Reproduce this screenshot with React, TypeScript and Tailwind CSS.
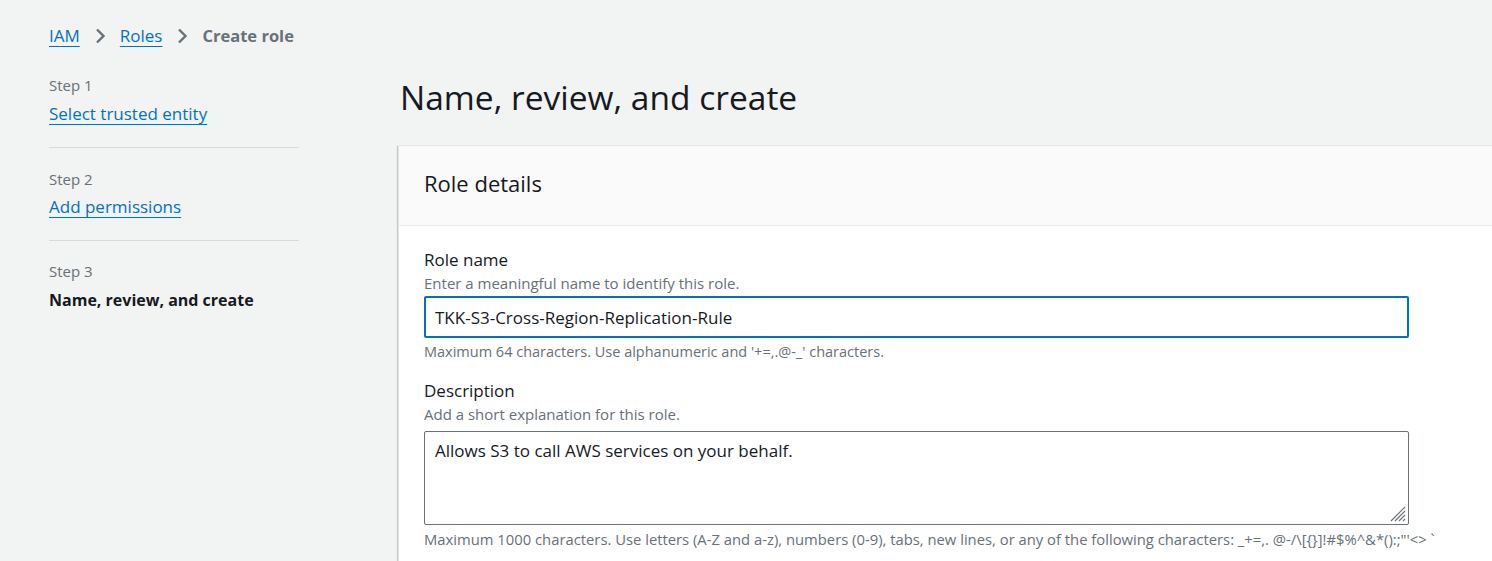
import React from 'react';

const font = { fontFamily: '"Open Sans", "Noto Sans", Arial, sans-serif' };

function Chevron() {
    return (
        <svg viewBox="0 0 16 16" className="w-4 h-4 mx-[12px]" fill="none" stroke="#687078" strokeWidth="2.4">
            <path d="M5 1.5l6.5 6.5L5 14.5" />
        </svg>
    );
}

function ResizeGrip() {
    return (
        <svg viewBox="0 0 16 16" className="absolute right-[3px] bottom-[3px] w-[16px] h-[16px]" stroke="#687078" strokeWidth="1.1">
            <path d="M1 15L15 1M5 15L15 5M9 15L15 9M13 15L15 13" />
        </svg>
    );
}

function Breadcrumbs() {
    return (
        <nav className="flex items-center text-[17px] leading-[22px]">
            <a className="text-[#0073bb] underline underline-offset-[4px] decoration-1">IAM</a>
            <Chevron />
            <a className="text-[#0073bb] underline underline-offset-[4px] decoration-1">Roles</a>
            <Chevron />
            <span className="text-[#687078] font-bold text-[16.5px]">Create role</span>
        </nav>
    );
}

function StepNav() {
    return (
        <div className="w-[250px] shrink-0 flex flex-col">
            <div className="pb-[22px] border-b border-[#d5dbdb]">
                <div className="text-[15px] leading-[20px] text-[#687078]">Step 1</div>
                <a className="block mt-[8px] text-[17px] leading-[22px] text-[#0073bb] underline underline-offset-[4px] decoration-1">Select trusted entity</a>
            </div>
            <div className="pt-[21px] pb-[22px] border-b border-[#d5dbdb]">
                <div className="text-[15px] leading-[20px] text-[#687078]">Step 2</div>
                <a className="block mt-[7px] text-[17px] leading-[22px] text-[#0073bb] underline underline-offset-[4px] decoration-1">Add permissions</a>
            </div>
            <div className="pt-[20px]">
                <div className="text-[15px] leading-[20px] text-[#687078]">Step 3</div>
                <div className="mt-[8px] text-[16px] leading-[22px] font-bold text-[#16191f] whitespace-nowrap">Name, review, and create</div>
            </div>
        </div>
    );
}

export default function App() {
    return (
        <div className="w-[1492px] h-[561px] overflow-hidden bg-[#f2f3f3]" style={font}>
            <div className="pl-[49px] pt-[25px]">
                <Breadcrumbs />
            </div>
            <div className="flex mt-[28px] pl-[49px]">
                <StepNav />
                <main className="ml-[99px] flex flex-col">
                    <h1 className="ml-[2px] mt-[2px] text-[33.5px] leading-[40px] text-[#16191f]">Name, review, and create</h1>
                    <section className="mt-[28px] w-[1140px] bg-white shadow-[0_1px_1px_0_rgba(0,28,36,0.3),1px_1px_1px_0_rgba(0,28,36,0.15),-1px_1px_1px_0_rgba(0,28,36,0.15)] border-l border-t border-[#e4e6e6]">
                        <div className="h-[80px] px-[25px] flex items-center bg-[#fafafa] border-b border-[#eaeded]">
                            <h2 className="mb-[6px] text-[22px] leading-[28px] text-[#16191f]">Role details</h2>
                        </div>
                        <div className="px-[25px] pt-[22px] pb-[20px] flex flex-col">
                            <div className="text-[17px] leading-[24px] text-[#16191f]">Role name</div>
                            <div className="text-[15px] leading-[22px] text-[#687078]">Enter a meaningful name to identify this role.</div>
                            <input
                                readOnly
                                value="TKK-S3-Cross-Region-Replication-Rule"
                                className="mt-[2px] w-[985px] h-[42px] px-[9px] border-2 border-[#0073bb] rounded-[2px] text-[17px] text-[#16191f] outline-none"
                                style={font}
                            />
                            <div className="mt-[4px] text-[14.5px] leading-[20px] text-[#687078]">Maximum 64 characters. Use alphanumeric and '+=,.@-_' characters.</div>

                            <div className="mt-[17px] text-[17px] leading-[24px] text-[#16191f]">Description</div>
                            <div className="text-[15px] leading-[22px] text-[#687078]">Add a short explanation for this role.</div>
                            <div className="relative mt-[6px] w-[985px] h-[94px]">
                                <textarea
                                    readOnly
                                    value="Allows S3 to call AWS services on your behalf."
                                    className="w-full h-full px-[10px] py-[7px] border border-[#687078] rounded-[2px] text-[17px] leading-[24px] text-[#16191f] outline-none resize-none"
                                    style={font}
                                />
                                <ResizeGrip />
                            </div>
                            <div className="mt-[4px] text-[14.8px] leading-[20px] text-[#687078] whitespace-nowrap">
                                {"Maximum 1000 characters. Use letters (A-Z and a-z), numbers (0-9), tabs, new lines, or any of the following characters: _+=,. @-/\\[{}]!#$%^&*():;\"'<> `"}
                            </div>
                        </div>
                    </section>
                </main>
            </div>
        </div>
    );
}
